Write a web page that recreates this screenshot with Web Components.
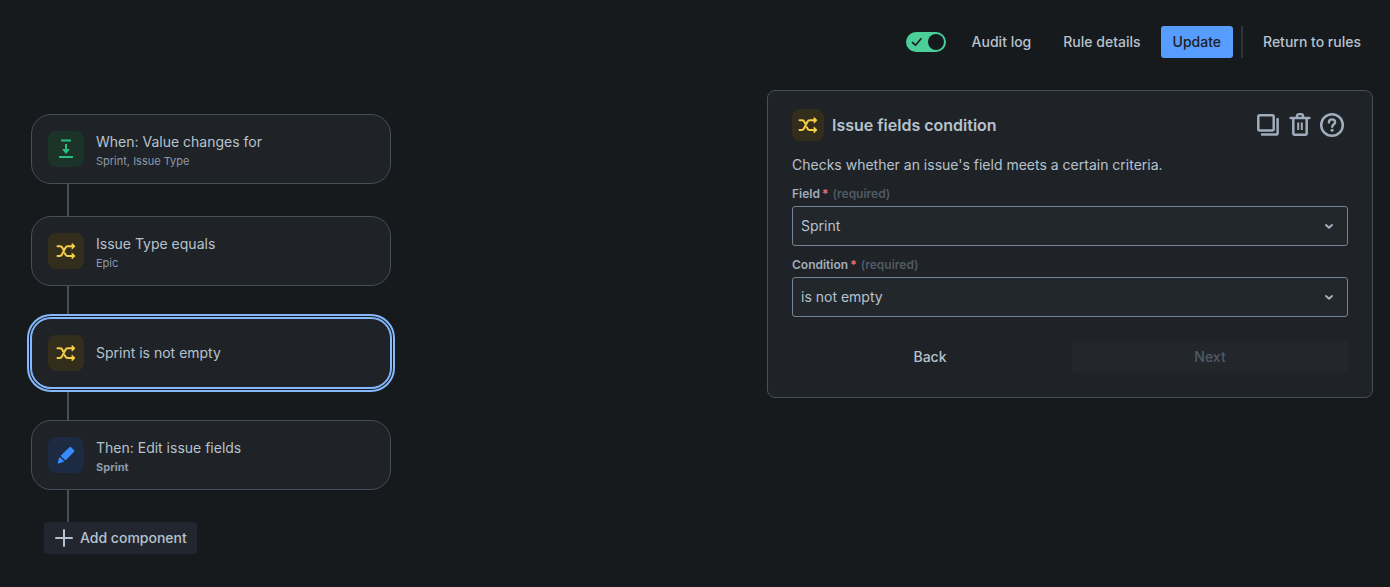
<!DOCTYPE html>
<html lang="en">
<head>
<meta charset="utf-8">
<title>Automation rule</title>
<style>
    body {
        margin: 0;
        background: #161a1d;
        color: #b6c2cf;
        font-family: Inter, "Liberation Sans", sans-serif;
        font-size: 14px;
        line-height: 20px;
    }
</style>
</head>
<body>
<rule-editor></rule-editor>

<!-- Page layout: toolbar on top, rule chain on the left, form on the right -->
<template id="rule-editor">
    <style>
        :host {
            display: block;
        }

        .toolbar {
            display: flex;
            align-items: center;
            justify-content: flex-end;
            gap: 8px;
            padding: 26px 17px 32px;
        }

        .toolbar rule-toggle {
            margin-right: 6px;
        }

        .divider {
            width: 2px;
            height: 32px;
            background: #2c333a;
        }

        main {
            display: grid;
            grid-template-columns: 736fr 606fr;
            align-items: start;
            padding: 0 17px 32px 31px;
        }

        .chain {
            display: flex;
            flex-direction: column;
            padding-top: 24px;
            max-width: 360px;
        }

        .line {
            width: 2px;
            height: 32px;
            margin-left: 36px;
            background: #454f59;
        }

        /* keeps the selection ring above the connecting lines */
        rule-node[selected] {
            position: relative;
            z-index: 1;
        }

        .chain ui-button {
            align-self: flex-start;
            margin-left: 13px;
        }
    </style>

    <header class="toolbar">
        <rule-toggle></rule-toggle>
        <ui-button>Audit log</ui-button>
        <ui-button>Rule details</ui-button>
        <ui-button variant="primary">Update</ui-button>
        <div class="divider"></div>
        <ui-button>Return to rules</ui-button>
    </header>

    <main>
        <section class="chain">
            <rule-node icon="trigger" tone="green">When: Value changes for<span slot="detail">Sprint, Issue Type</span></rule-node>
            <div class="line"></div>
            <rule-node icon="shuffle" tone="yellow">Issue Type equals<span slot="detail">Epic</span></rule-node>
            <div class="line"></div>
            <rule-node icon="shuffle" tone="yellow" selected>Sprint is not empty</rule-node>
            <div class="line"></div>
            <rule-node icon="pencil" tone="blue">Then: Edit issue fields<b slot="detail">Sprint</b></rule-node>
            <div class="line"></div>
            <ui-button variant="add"><ui-icon slot="before" name="plus"></ui-icon>Add component</ui-button>
        </section>
        <condition-panel></condition-panel>
    </main>
</template>

<template id="rule-toggle">
    <style>
        :host {
            display: block;
        }

        input {
            display: block;
            appearance: none;
            width: 40px;
            height: 20px;
            margin: 0;
            border-radius: 10px;
            background: #738496;
            cursor: pointer;
        }

        input:checked {
            background: #4bce97;
        }

        label {
            display: grid;
        }

        input, svg {
            grid-area: 1 / 1;
        }

        svg {
            pointer-events: none;
        }
    </style>
    <label>
        <input type="checkbox" aria-label="Rule enabled" checked>
        <svg width="40" height="20" viewBox="0 0 40 20" fill="none">
            <path d="M6.500 10.500l3 2.700 5.500-6.500" stroke="#1d2125" stroke-width="1.700" stroke-linecap="round" stroke-linejoin="round"/>
            <circle cx="30" cy="10" r="8" fill="#161a1d"/>
        </svg>
    </label>
</template>

<template id="ui-button">
    <style>
        :host {
            display: block;
        }

        button {
            display: flex;
            align-items: center;
            justify-content: center;
            width: 100%;
            height: 32px;
            padding: 0 12px;
            border: 0;
            border-radius: 3px;
            background: none;
            color: #b6c2cf;
            font: inherit;
            font-weight: 500;
            white-space: nowrap;
            cursor: pointer;
        }

        :host([variant="primary"]) button {
            background: #579dff;
            color: #1d2125;
        }

        :host([variant="add"]) button {
            gap: 4px;
            padding: 0 10px 0 8px;
            background: #22272f;
        }

        button:disabled {
            background: #23272b;
            color: #505a65;
            cursor: not-allowed;
        }
    </style>
    <button type="button"><slot name="before"></slot><slot></slot></button>
</template>

<template id="rule-node">
    <style>
        :host {
            display: block;
        }

        button {
            display: flex;
            align-items: center;
            gap: 12px;
            width: 100%;
            height: 70px;
            padding: 0 16px;
            border: 1px solid #454f59;
            border-radius: 20px;
            background: #1f2226;
            color: inherit;
            font: inherit;
            text-align: left;
            cursor: pointer;
        }

        :host([selected]) button {
            border-color: #85b8ff;
            box-shadow: 0 0 0 1px #85b8ff, 0 0 0 2px #161a1d, 0 0 0 4px #85b8ff;
        }

        .text {
            display: flex;
            flex-direction: column;
        }

        ::slotted([slot="detail"]) {
            margin-top: 3px;
            color: #8c9bab;
            font-size: 11px;
            line-height: 12px;
        }
    </style>
    <button type="button">
        <icon-tile></icon-tile>
        <span class="text"><span><slot></slot></span><slot name="detail"></slot></span>
    </button>
</template>

<template id="icon-tile">
    <style>
        :host {
            display: grid;
            place-items: center;
            flex: none;
            width: 36px;
            height: 36px;
            border-radius: 8px;
        }

        :host([size="small"]) {
            width: 32px;
            height: 32px;
        }

        :host([tone="green"]) {
            background: #1c3329;
            color: #2abb7f;
        }

        :host([tone="yellow"]) {
            background: #332e1b;
            color: #f5cd47;
        }

        :host([tone="blue"]) {
            background: #1c2b41;
            color: #388bff;
        }
    </style>
    <ui-icon></ui-icon>
</template>

<template id="select-field">
    <style>
        :host {
            display: block;
        }

        .label {
            display: flex;
            gap: 4px;
            color: #9fadbc;
            font-size: 12px;
            font-weight: 600;
            line-height: 16px;
            margin-bottom: 4px;
        }

        .star {
            color: #f87168;
            margin-left: -2px;
        }

        .hint {
            color: #505a65;
        }

        .control {
            display: grid;
            align-items: center;
        }

        select, ui-icon {
            grid-area: 1 / 1;
        }

        select {
            appearance: none;
            width: 100%;
            height: 40px;
            padding: 0 40px 0 8px;
            border: 1px solid #738496;
            border-radius: 3px;
            background: #22272b;
            color: inherit;
            font: inherit;
        }

        ui-icon {
            justify-self: end;
            margin-right: 7px;
            color: #9fadbc;
            pointer-events: none;
        }
    </style>
    <label class="label" for="control"><slot></slot><span class="star">*</span><span class="hint">(required)</span></label>
    <div class="control">
        <select id="control"></select>
        <ui-icon name="chevron"></ui-icon>
    </div>
</template>

<template id="condition-panel">
    <style>
        :host {
            display: block;
            padding: 18px 24px 24px;
            border: 1px solid #454f59;
            border-radius: 8px;
            background: #1f2226;
        }

        header {
            display: flex;
            align-items: center;
            gap: 8px;
        }

        h2 {
            flex: 1;
            margin: 0;
            font-size: 16px;
            font-weight: 600;
            line-height: 20px;
        }

        .actions {
            display: flex;
        }

        .actions button {
            display: grid;
            place-items: center;
            width: 32px;
            height: 32px;
            padding: 0;
            border: 0;
            background: none;
            color: #9fadbc;
            cursor: pointer;
        }

        p {
            margin: 14px 0 11px;
        }

        select-field + select-field {
            margin-top: 11px;
        }

        footer {
            display: grid;
            grid-template-columns: 1fr 1fr;
            gap: 4px;
            margin-top: 24px;
        }
    </style>
    <header>
        <icon-tile icon="shuffle" tone="yellow" size="small"></icon-tile>
        <h2>Issue fields condition</h2>
        <div class="actions">
            <button type="button" aria-label="Duplicate"><ui-icon name="copy"></ui-icon></button>
            <button type="button" aria-label="Delete"><ui-icon name="trash"></ui-icon></button>
            <button type="button" aria-label="Help"><ui-icon name="help"></ui-icon></button>
        </div>
    </header>
    <p>Checks whether an issue's field meets a certain criteria.</p>
    <select-field options="Sprint">Field</select-field>
    <select-field options="is not empty">Condition</select-field>
    <footer>
        <ui-button>Back</ui-button>
        <ui-button disabled>Next</ui-button>
    </footer>
</template>

<script>
// All icons share a 24x24 box and take their colour from the parent.
const icons = {
    trigger: `
        <path d="M7 3.500h10M5 19.900h14" stroke="currentColor" stroke-width="2"/>
        <path d="M12 7v6" stroke="currentColor" stroke-width="2"/>
        <path d="M9 12h6c.5 0 .7.500.400.900l-2.900 3.500a.6.6 0 0 1-1 0l-2.900-3.500C8.300 12.500 8.500 12 9 12z" fill="currentColor"/>`,
    shuffle: `
        <path d="M3.500 7.300H6c1.300 0 2 .6 2.500 1.700l.6 1.300M10.800 14.200l.5 1.100c.5 1.100 1.200 1.700 2.500 1.700H19" stroke="currentColor" stroke-width="2" stroke-linecap="round"/>
        <path d="M3.500 17h2.100c1.200 0 2-.6 2.500-1.700L11.300 9c.5-1.100 1.300-1.700 2.500-1.700H19" stroke="currentColor" stroke-width="2" stroke-linecap="round"/>
        <path d="M17.600 4.600c0-.400.500-.600.800-.3l2.600 2.500c.3.300.3.700 0 1l-2.600 2.500c-.3.300-.8.100-.8-.3zM17.600 14.300c0-.400.500-.600.800-.3l2.600 2.500c.3.300.3.700 0 1l-2.600 2.500c-.3.300-.8.100-.8-.3z" fill="currentColor"/>`,
    pencil: `
        <path d="M6.600 12.800l8.700-8.400c.6-.6 1.500-.6 2.100 0l2.500 2.500c.6.600.6 1.500 0 2.100l-8.500 8.500z" fill="currentColor"/>
        <path d="M5.900 13.900l4.300 4.300-1.300.9-4.300 1.300c-.6.200-1-.2-.8-.8l1.100-4.100z" fill="currentColor"/>`,
    plus: `<path d="M12 4v16M4 12h16" stroke="currentColor" stroke-width="2" stroke-linecap="round"/>`,
    chevron: `<path d="M9 11l3 2.800 3-2.800" stroke="currentColor" stroke-width="2" stroke-linecap="round" stroke-linejoin="round"/>`,
    copy: `
        <rect x="2.300" y="2.200" width="15.400" height="15.400" rx="1.500" stroke="currentColor" stroke-width="2.500"/>
        <path d="M21.600 6v14c0 1-.7 1.600-1.600 1.600H6" stroke="currentColor" stroke-width="2.500" stroke-linecap="round"/>`,
    trash: `
        <path d="M2.700 5h18.600" stroke="currentColor" stroke-width="2.500" stroke-linecap="round"/>
        <path d="M9 4.500V3c0-1.200.9-1.900 2-1.900h2c1.100 0 2 .7 2 1.900v1.500" stroke="currentColor" stroke-width="2.400"/>
        <path d="M5.300 6v14.300c0 1 .6 1.500 1.500 1.500h10.400c.9 0 1.500-.5 1.500-1.500V6" stroke="currentColor" stroke-width="2.500"/>
        <path d="M10.200 9.500v7.500M13.800 9.500v7.500" stroke="currentColor" stroke-width="2"/>`,
    help: `
        <circle cx="12" cy="12" r="10.800" stroke="currentColor" stroke-width="2.500"/>
        <path d="M8.900 9.400c0-1.900 1.300-3 3.100-3s3.100 1.100 3.100 2.800c0 2.300-2.900 2.400-2.900 4.500" stroke="currentColor" stroke-width="2.400" stroke-linecap="round"/>
        <circle cx="12.100" cy="17.300" r="1.500" fill="currentColor"/>`,
}

// Base class: clones the template that has the same id as the tag name.
class TemplateElement extends HTMLElement {
    constructor() {
        super()

        this.shadow = this.attachShadow({ mode: 'open' })
        const template = document.getElementById(this.localName)
        this.shadow.appendChild(template.content.cloneNode(true))
    }
}

class UiIcon extends HTMLElement {
    static get observedAttributes() {
        return ['name']
    }

    constructor() {
        super()
        this.shadow = this.attachShadow({ mode: 'open' })
    }

    attributeChangedCallback() {
        this.shadow.innerHTML = `
            <style>
                :host { display: block; flex: none; width: 24px; height: 24px; }
                svg { display: block; overflow: visible; }
            </style>
            <svg width="24" height="24" viewBox="0 0 24 24" fill="none" aria-hidden="true">${icons[this.getAttribute('name')] || ''}</svg>
        `
    }
}

class IconTile extends TemplateElement {
    static get observedAttributes() {
        return ['icon']
    }

    attributeChangedCallback(name, oldValue, value) {
        this.shadow.querySelector('ui-icon').setAttribute('name', value)
    }
}

class UiButton extends TemplateElement {
    connectedCallback() {
        this.shadow.querySelector('button').disabled = this.hasAttribute('disabled')
    }
}

class RuleToggle extends TemplateElement {}

class RuleNode extends TemplateElement {
    connectedCallback() {
        const tile = this.shadow.querySelector('icon-tile')
        tile.setAttribute('icon', this.getAttribute('icon'))
        tile.setAttribute('tone', this.getAttribute('tone'))
    }
}

class SelectField extends TemplateElement {
    connectedCallback() {
        const select = this.shadow.querySelector('select')
        this.getAttribute('options').split(',').forEach((text) => {
            select.add(new Option(text))
        })
    }
}

class ConditionPanel extends TemplateElement {}

class RuleEditor extends TemplateElement {}

window.customElements.define('ui-icon', UiIcon)
window.customElements.define('icon-tile', IconTile)
window.customElements.define('ui-button', UiButton)
window.customElements.define('rule-toggle', RuleToggle)
window.customElements.define('rule-node', RuleNode)
window.customElements.define('select-field', SelectField)
window.customElements.define('condition-panel', ConditionPanel)
window.customElements.define('rule-editor', RuleEditor)
</script>
</body>
</html>
